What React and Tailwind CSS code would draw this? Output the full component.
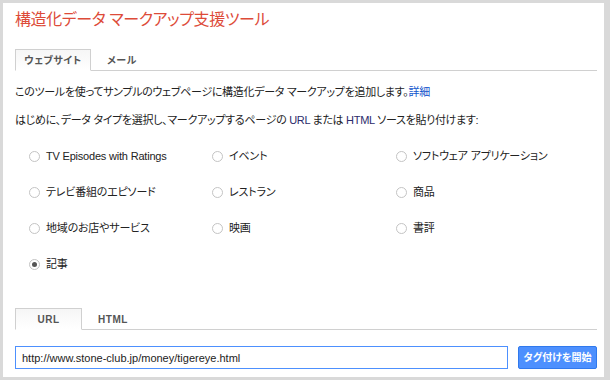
import React, { useState } from 'react';

const font = "font-['Liberation_Sans','Noto_Sans_CJK_JP',sans-serif] [font-feature-settings:'palt']";

const dataTypes = [
  'TV Episodes with Ratings',
  'イベント',
  'ソフトウェア アプリケーション',
  'テレビ番組のエピソード',
  'レストラン',
  '商品',
  '地域のお店やサービス',
  '映画',
  '書評',
  '記事',
];

const Radio = ({ checked }) => (
  <span className="flex h-[11px] w-[11px] items-center justify-center rounded-full border border-[#c4c4c4] bg-white">
    {checked && <span className="h-[5px] w-[5px] rounded-full bg-[#555]" />}
  </span>
);

const Tabs = ({ tabs, active, onChange }) => (
  <div className="flex h-[22px] items-end border-b border-[#d0d0d0]">
    {tabs.map((t) => (
      <button
        key={t.label}
        onClick={() => onChange(t.label)}
        className={`-mb-px flex h-[22px] items-center justify-center text-[10px] font-bold tracking-[0.5px] text-[#555] ${t.w} ${
          active === t.label ? 'border border-[#d0d0d0] border-b-white bg-gradient-to-b from-[#f6f6f6] to-white' : ''
        }`}
      >
        {t.label}
      </button>
    ))}
  </div>
);

export default function App() {
  const [siteTab, setSiteTab] = useState('ウェブサイト');
  const [srcTab, setSrcTab] = useState('URL');
  const [selected, setSelected] = useState('記事');
  const [url, setUrl] = useState('http://www.stone-club.jp/money/tigereye.html');

  return (
    <div className={`h-[380px] w-[610px] border-t-[3px] border-l-[3px] border-r-[6px] border-b-[3px] border-[#d9d9d9] bg-white ${font}`}>
      <div className="pl-[12px] pr-[7px]">
        <h1 className="mt-[5px] text-[16px] leading-[24px] tracking-[-0.4px] text-[#dd4b39]">構造化データ マークアップ支援ツール</h1>

        <div className="mt-[17px]">
          <Tabs
            tabs={[{ label: 'ウェブサイト', w: 'w-[76px]' }, { label: 'メール', w: 'w-[62px]' }]}
            active={siteTab}
            onChange={setSiteTab}
          />
        </div>

        <p className="mt-[11px] text-[11px] leading-[20px] tracking-[-0.3px] text-[#222]">
          このツールを使ってサンプルのウェブページに構造化データ マークアップを追加します。
          <a href="#" className="text-[#1155cc]">詳細</a>
        </p>
        <p className="mt-[8px] text-[11px] leading-[20px] tracking-[-0.3px] text-[#222]">
          はじめに、データ タイプを選択し、マークアップするページの <span className="text-[#2b2b6b]">URL</span> または{' '}
          <span className="text-[#2b2b6b]">HTML</span> ソースを貼り付けます:
        </p>

        <div className="mt-[8px] grid grid-cols-[183px_184px_1fr] pl-[14px]">
          {dataTypes.map((d) => (
            <label
              key={d}
              onClick={() => setSelected(d)}
              className="flex h-[36px] cursor-pointer items-center gap-[6px] text-[11px] tracking-[-0.2px] text-[#222]"
            >
              <Radio checked={selected === d} />
              <span>{d}</span>
            </label>
          ))}
        </div>

        <div className="mt-[26px]">
          <Tabs
            tabs={[{ label: 'URL', w: 'w-[67px]' }, { label: 'HTML', w: 'w-[62px]' }]}
            active={srcTab}
            onChange={setSrcTab}
          />
        </div>

        <div className="mt-[16px] flex items-center gap-[10px]">
          <input
            value={url}
            onChange={(e) => setUrl(e.target.value)}
            className="h-[23px] w-[493px] border border-[#4d90fe] px-[6px] text-[11px] text-[#222] outline-none"
          />
          <button className="h-[23px] w-[79px] rounded-[2px] border border-[#3079ed] bg-[#4d90fe] text-[10px] font-bold text-white">
            タグ付けを開始
          </button>
        </div>
      </div>
    </div>
  );
}
